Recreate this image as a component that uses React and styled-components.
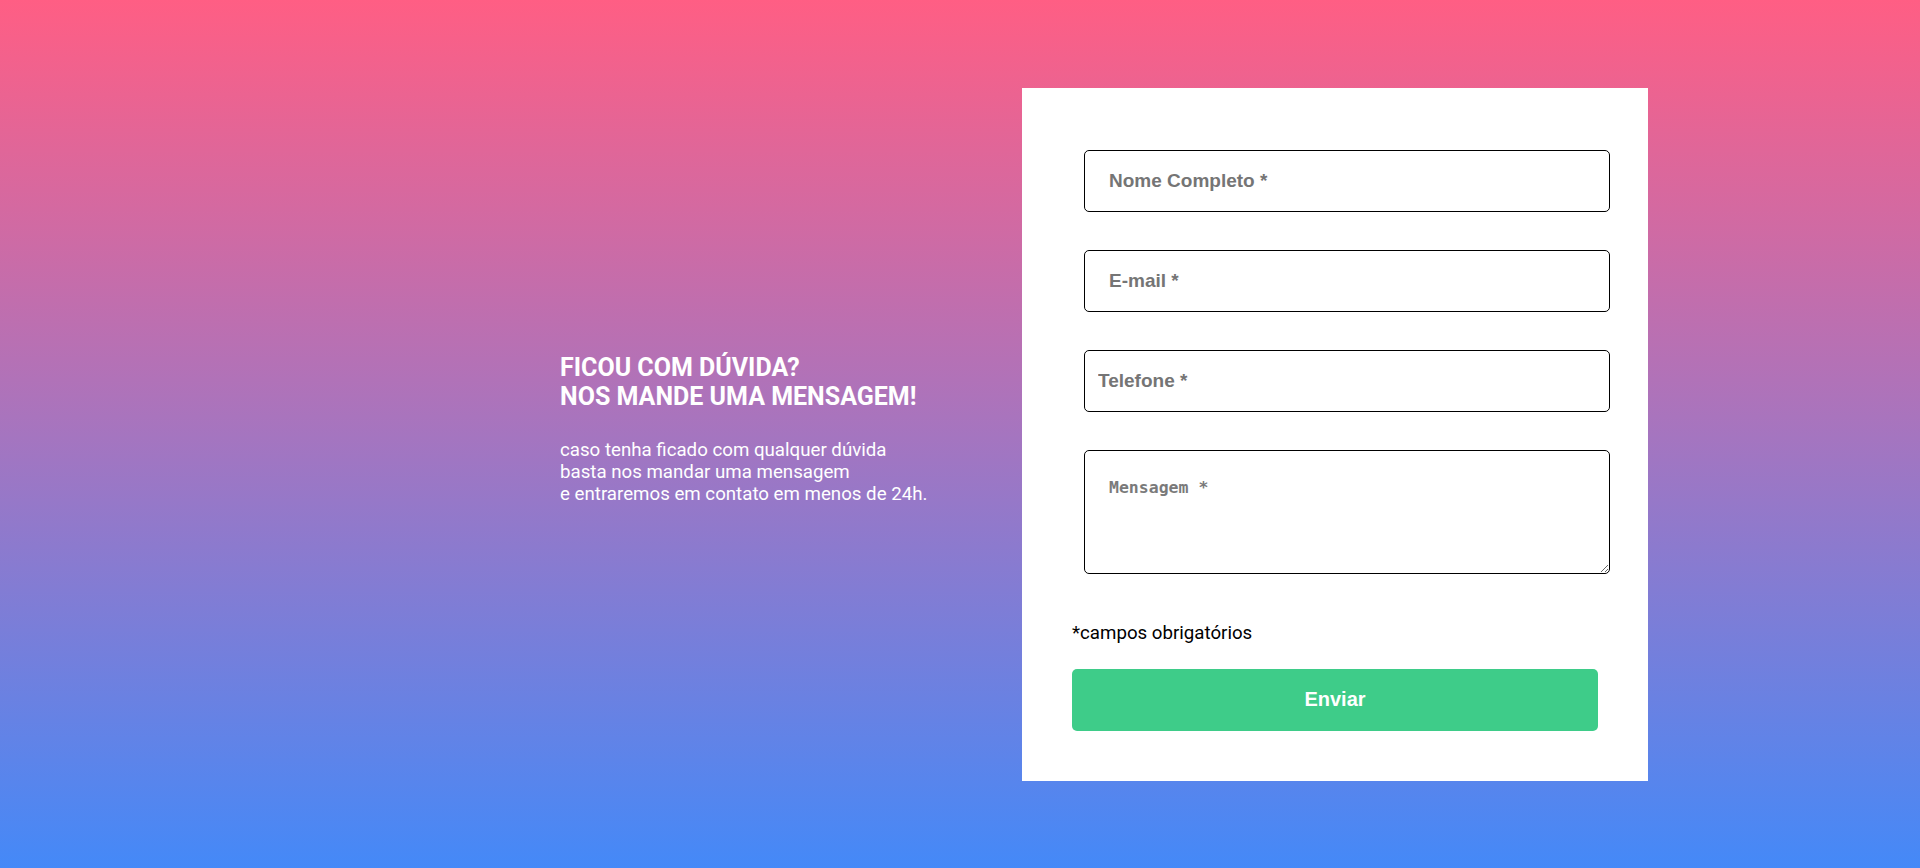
import React from 'react'
import styled, { createGlobalStyle } from 'styled-components'

const GlobalStyle = createGlobalStyle`
    * {
        box-sizing: border-box;
    }

    body {
        margin: 0;
        font-family: Roboto, "Liberation Sans", Arial, sans-serif;
    }
`;

const Page = styled.main`
    display: flex;
    align-items: center;
    min-height: 100vh;
    padding-left: 560px;
    background: linear-gradient(180deg, #ff5e84 0%, #a974bd 48%, #4489f8 100%);
`;

const Intro = styled.section`
    width: 462px;
    margin-bottom: 10px;
    color: #fff;
`;

const Title = styled.h2`
    margin: 0 0 28px;
    font-size: 25px;
    font-weight: 700;
    line-height: 29px;
`;

const Text = styled.p`
    margin: 0;
    font-size: 18.7px;
    line-height: 22px;
`;

const Card = styled.div`
    width: 626px;
    background-color: #fff;
`;

const Form = styled.form`
    padding: 62px 50px 50px;
`;

const Field = styled.input`
    display: block;
    width: 100%;
    height: 62px;
    margin: 0 0 38px 12px;
    padding: 0 ${({ $pad }) => $pad || 24}px;
    border: 1px solid #000;
    border-radius: 5px;
    font-family: "Liberation Sans", Arial, sans-serif;
    font-size: 19px;
    font-weight: 700;
    outline: none;

    &::placeholder {
        color: #757575;
    }
`;

const Message = styled.textarea`
    display: block;
    width: 100%;
    height: 124px;
    margin: 0 0 49px 12px;
    padding: 27px 24px;
    border: 1px solid #000;
    border-radius: 5px;
    font-family: "DejaVu Sans Mono", "Liberation Mono", monospace;
    font-size: 16.5px;
    font-weight: 700;
    outline: none;

    &::placeholder {
        color: #7a7a7a;
    }
`;

const Required = styled.p`
    margin: 0 0 25px;
    font-size: 18.7px;
    line-height: 21px;
    color: #000;
`;

const Button = styled.button`
    display: block;
    width: 100%;
    height: 62px;
    border: none;
    border-radius: 5px;
    background-color: #3ecc89;
    color: #fff;
    font-family: "Liberation Sans", Arial, sans-serif;
    font-size: 20px;
    font-weight: 700;
    cursor: pointer;
`;

const App = () => {
    return (
        <>
            <GlobalStyle />
            <Page>
                <Intro>
                    <Title>
                        FICOU COM DÚVIDA?<br />
                        NOS MANDE UMA MENSAGEM!
                    </Title>
                    <Text>
                        caso tenha ficado com qualquer dúvida<br />
                        basta nos mandar uma mensagem<br />
                        e entraremos em contato em menos de 24h.
                    </Text>
                </Intro>
                <Card>
                    <Form onSubmit={(e) => e.preventDefault()}>
                        <Field type="text" placeholder="Nome Completo *" />
                        <Field type="email" placeholder="E-mail *" />
                        <Field type="tel" placeholder="Telefone *" $pad={13} />
                        <Message placeholder="Mensagem *" />
                        <Required>*campos obrigatórios</Required>
                        <Button type="submit">Enviar</Button>
                    </Form>
                </Card>
            </Page>
        </>
    )
}

export default App
